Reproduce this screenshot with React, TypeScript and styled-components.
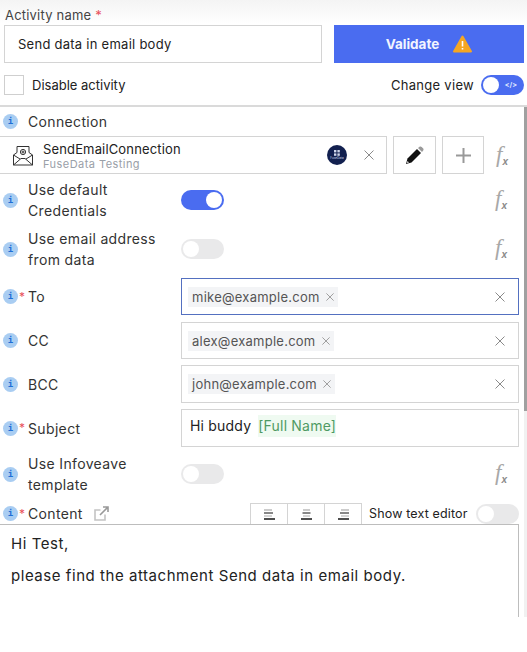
import styled, { createGlobalStyle } from 'styled-components'

const GlobalStyle = createGlobalStyle`
  html, body {
    margin: 0;
    padding: 0;
    background: #fff;
  }
  * {
    box-sizing: border-box;
  }
`

const Page = styled.div`
  width: 527px;
  height: 652px;
  overflow: hidden;
  background: #fff;
  color: #222;
  font-family: Inter, "Open Sans", sans-serif;
  font-size: 13px;
`

const Header = styled.div`
  height: 105px;
  padding: 7px 3px 0 4px;
  background: linear-gradient(#f4f4f4 0, #fff 24px);
`

const TopLabel = styled.div`
  height: 18px;
  line-height: 16px;
  padding-left: 1px;
  color: #444;
  letter-spacing: 0.2px;
`

const Star = styled.span`
  color: #e8505b;
`

const NameRow = styled.div`
  display: flex;
  gap: 12px;
`

const NameInput = styled.div`
  width: 318px;
  height: 38px;
  padding-left: 13px;
  display: flex;
  align-items: center;
  border: 1px solid #d4d4d4;
  color: #222;
  letter-spacing: 0.26px;
`

const ValidateButton = styled.div`
  flex: 1;
  height: 38px;
  display: flex;
  align-items: center;
  justify-content: center;
  gap: 14px;
  background: #4a6cf0;
  color: #f2f4ff;
  font-size: 13.5px;
  font-weight: 700;
`

const OptionsRow = styled.div`
  display: flex;
  align-items: center;
  height: 20px;
  margin-top: 12px;
`

const Checkbox = styled.div`
  width: 20px;
  height: 20px;
  border: 1px solid #cfcfcf;
  margin-right: 8px;
`

const Spacer = styled.div`
  flex: 1;
`

const ViewLabel = styled.span`
  margin-right: 7px;
  letter-spacing: 0.3px;
`

const Switch = styled.div<{ $on?: boolean; $primary?: boolean }>`
  position: relative;
  flex: none;
  width: 43px;
  height: 20px;
  border-radius: 10px;
  background: ${p => (p.$primary ? '#4a6cf0' : '#e9e9ea')};
  &::after {
    content: '';
    position: absolute;
    top: 2px;
    left: ${p => (p.$on ? '25px' : '2px')};
    width: 16px;
    height: 16px;
    border-radius: 50%;
    background: #fff;
  }
`

const CodeMark = styled.span`
  position: absolute;
  right: 7px;
  top: 3px;
  color: #dfe5ff;
  font-size: 7px;
  line-height: 14px;
  font-weight: 700;
`

const Body = styled.div`
  position: relative;
  height: 512px;
  overflow: hidden;
  border-top: 2px solid #dadada;
`

const Form = styled.div`
  display: flex;
  flex-direction: column;
  gap: 7px;
  padding-top: 5px;
  margin-right: 8px;
`

const Row = styled.div<{ $height?: number; $top?: number }>`
  display: flex;
  align-items: center;
  height: ${p => p.$height ?? 37}px;
  margin-top: ${p => p.$top ?? 0}px;
`

const LabelCell = styled.div`
  flex: none;
  width: 181px;
  padding-left: 3px;
  display: flex;
  align-items: center;
`

const InfoIcon = styled.span`
  flex: none;
  width: 15px;
  height: 15px;
  border-radius: 50%;
  background: #a9cdf2;
  color: #1f6fd6;
  font-family: "DejaVu Sans Mono", monospace;
  font-size: 9px;
  font-weight: 700;
  line-height: 15px;
  text-align: center;
`

const RequiredMark = styled.span<{ $show?: boolean }>`
  flex: none;
  width: 10px;
  padding-left: 1px;
  color: #e8505b;
  font-size: 12px;
  line-height: 12px;
  visibility: ${p => (p.$show ? 'visible' : 'hidden')};
`

const LabelText = styled.span`
  color: #333;
  font-size: 14px;
  line-height: 21px;
  letter-spacing: 0.35px;
`

const Fx = styled.span`
  flex: none;
  margin-top: -3px;
  font-family: "Liberation Serif", serif;
  font-style: italic;
  font-size: 23px;
  line-height: 24px;
  color: #a8a8a8;
  white-space: nowrap;
  sub {
    font-family: "Liberation Sans", sans-serif;
    font-size: 10px;
    font-weight: 700;
    color: #8a8a8a;
    line-height: 0;
    vertical-align: -3px;
  }
`

const FieldBox = styled.div<{ $active?: boolean }>`
  flex: 1;
  height: 100%;
  display: flex;
  align-items: center;
  padding: 0 13px 0 6px;
  border: 1px solid ${p => (p.$active ? '#5470c0' : '#d4d4d4')};
`

const Tag = styled.span`
  display: inline-flex;
  align-items: center;
  gap: 6px;
  height: 20px;
  padding: 0 4px;
  background: #f3f4f6;
  color: #555;
  letter-spacing: 0.25px;
`

const ClearIcon = styled.svg`
  flex: none;
  stroke: #8a8a8a;
  fill: none;
  stroke-width: 1;
`

const ClearSlot = styled.div`
  flex: 1;
  display: flex;
  justify-content: flex-end;
`

const ToggleSlot = styled.div`
  flex: 1;
  display: flex;
  align-items: center;
  justify-content: space-between;
  padding-right: 12px;
`

const ConnectionBox = styled.div`
  flex: none;
  width: 388px;
  height: 100%;
  margin-left: -1px;
  display: flex;
  align-items: center;
  padding: 0 12px 0 13px;
  border: 1px solid #d4d4d4;
`

const ConnectionText = styled.div`
  margin-left: 10px;
  flex: 1;
  padding-top: 2px;
`

const ConnectionName = styled.div`
  line-height: 16px;
  color: #222;
  letter-spacing: 0.15px;
`

const ConnectionSub = styled.div`
  font-size: 11px;
  line-height: 15px;
  color: #9aa0a8;
  letter-spacing: 0.45px;
`

const Logo = styled.div`
  width: 20px;
  height: 20px;
  margin-right: 17px;
  border-radius: 50%;
  background: #12204f;
  color: #cfd6ea;
  display: flex;
  flex-direction: column;
  align-items: center;
  justify-content: center;
`

const LogoText = styled.span`
  font-size: 3px;
  line-height: 4px;
`

const SquareButton = styled.div<{ $width: number }>`
  flex: none;
  width: ${p => p.$width}px;
  height: 100%;
  margin-left: 6px;
  display: flex;
  align-items: center;
  justify-content: center;
  border: 1px solid #d4d4d4;
`

const FxEnd = styled.div`
  flex: none;
  margin-left: 12px;
`

const SubjectBox = styled.div`
  flex: 1;
  height: 100%;
  padding: 5px 0 0 8px;
  display: flex;
  align-items: flex-start;
  gap: 7px;
  border: 1px solid #d4d4d4;
  color: #222;
  font-size: 14px;
  line-height: 22px;
  letter-spacing: 0.2px;
`

const Token = styled.span`
  background: #effaf1;
  color: #4f9a63;
`

const ContentHead = styled.div`
  display: flex;
  align-items: center;
  height: 21px;
  margin-top: 1px;
`

const ContentLabel = styled(LabelCell)`
  width: 250px;
`

const OpenIcon = styled.svg`
  margin-left: 11px;
  stroke: #c4c4c4;
  fill: none;
  stroke-width: 1.6;
`

const AlignGroup = styled.div`
  flex: none;
  display: flex;
  height: 21px;
  width: 112px;
  border: 1px solid #d4d4d4;
  border-bottom: none;
`

const AlignButton = styled.div`
  flex: 1;
  display: flex;
  align-items: center;
  justify-content: center;
  & + & {
    border-left: 1px solid #d4d4d4;
  }
`

const EditorLabel = styled.span`
  margin: 0 8px 0 7px;
  font-size: 12.5px;
  white-space: nowrap;
  letter-spacing: 0.15px;
`

const Editor = styled.div`
  height: 140px;
  margin-top: -7px;
  padding: 9px 10px 0 11px;
  border: 1px solid #bdbdbd;
  border-left: none;
  font-size: 15px;
  line-height: 20px;
  color: #222;
  letter-spacing: 0.55px;
`

const EditorLine = styled.p`
  margin: 0 0 12px;
`

const Scrollbar = styled.div`
  position: absolute;
  top: 0;
  right: 0;
  bottom: 0;
  width: 3px;
  background: #f1f1f1;
  &::after {
    content: '';
    display: block;
    height: 304px;
    background: #a0a0a0;
  }
`

function Info({ required, children }: { required?: boolean; children: React.ReactNode }) {
  return (
    <LabelCell>
      <InfoIcon>i</InfoIcon>
      <RequiredMark $show={required}>*</RequiredMark>
      <LabelText>{children}</LabelText>
    </LabelCell>
  )
}

function FxMark() {
  return (
    <Fx>
      f<sub>x</sub>
    </Fx>
  )
}

function Clear({ size = 10 }: { size?: number }) {
  return (
    <ClearIcon width={size} height={size} viewBox="0 0 10 10">
      <path d="M0.5 0.5 9.5 9.5M9.5 0.5 0.5 9.5" />
    </ClearIcon>
  )
}

function EmailField({ value, active }: { value: string; active?: boolean }) {
  return (
    <FieldBox $active={active}>
      <Tag>
        {value}
        <Clear size={8} />
      </Tag>
      <ClearSlot>
        <Clear />
      </ClearSlot>
    </FieldBox>
  )
}

// each icon is four lines: pale, black, pale, heavy
function AlignLines({ kind }: { kind: 'left' | 'center' | 'right' }) {
  const short = { left: [0, 8], center: [2, 9], right: [3, 11] }[kind]
  const mid = { left: [0, 9], center: [1.5, 9.5], right: [2, 11] }[kind]
  return (
    <svg width="11" height="11" viewBox="0 0 11 11" fill="none">
      <path d={`M${short[0]} 1H${short[1]}`} stroke="#999" />
      <path d={`M${mid[0]} 4H${mid[1]}`} stroke="#111" />
      <path d={`M${short[0]} 7H${short[1]}`} stroke="#aaa" />
      <path d="M0 10H11" stroke="#222" strokeWidth="1.6" />
    </svg>
  )
}

export default function App() {
  return (
    <Page>
      <GlobalStyle />
      <Header>
        <TopLabel>
          Activity name <Star>*</Star>
        </TopLabel>
        <NameRow>
          <NameInput>Send data in email body</NameInput>
          <ValidateButton>
            Validate
            <svg width="19" height="18" viewBox="0 0 19 18">
              <path d="M9.5 1.5 18 16.5H1Z" fill="#f5a623" stroke="#f5a623" strokeWidth="2" strokeLinejoin="round" />
              <path d="M9.5 6v5.5M9.5 13v1.6" stroke="#fff" strokeWidth="1.6" />
            </svg>
          </ValidateButton>
        </NameRow>
        <OptionsRow>
          <Checkbox />
          <span>Disable activity</span>
          <Spacer />
          <ViewLabel>Change view</ViewLabel>
          <Switch $primary>
            <CodeMark>&lt;/&gt;</CodeMark>
          </Switch>
        </OptionsRow>
      </Header>
      <Body>
        <Form>
          <Row $height={18}>
            <Info>Connection</Info>
          </Row>
          <Row $height={38} $top={-1}>
            <ConnectionBox>
              <svg width="20" height="21" viewBox="0 0 20 21" fill="none" stroke="#333" strokeWidth="1">
                <path d="M0.5 10 4 7.5V1.5H16V7.5L19.5 10V20H0.5Z" />
                <path d="M0.5 20 8 13.5H12L19.5 20M0.5 10 7 14M19.5 10 13 14" />
                <circle cx="10" cy="7" r="2.6" />
                <circle cx="10" cy="7" r="1" />
              </svg>
              <ConnectionText>
                <ConnectionName>SendEmailConnection</ConnectionName>
                <ConnectionSub>FuseData Testing</ConnectionSub>
              </ConnectionText>
              <Logo>
                <svg width="6" height="6" viewBox="0 0 6 6" fill="#cfd6ea">
                  <rect width="2.4" height="2.4" />
                  <rect x="3.4" width="2.4" height="2.4" />
                  <rect y="3.4" width="2.4" height="2.4" />
                  <rect x="3.4" y="3.4" width="2.4" height="2.4" />
                </svg>
                <LogoText>FuseData</LogoText>
              </Logo>
              <Clear />
            </ConnectionBox>
            <SquareButton $width={43}>
              <svg width="19" height="19" viewBox="0 0 19 19">
                <path d="M1 18 2.5 12.5 12 3 16 7 6.5 16.5Z" fill="#111" />
                <path d="M2.6 15 4 16.4 2 17Z" fill="#fff" />
                <path d="M13 2 14.5 0.8C15.2 0.3 16 0.3 16.7 1L18 2.3C18.7 3 18.7 3.8 18.2 4.5L17 6Z" fill="#9a9a9a" />
              </svg>
            </SquareButton>
            <SquareButton $width={42}>
              <svg width="15" height="15" viewBox="0 0 15 15" stroke="#999" strokeWidth="2">
                <path d="M7.5 0V15M0 7.5H15" />
              </svg>
            </SquareButton>
            <FxEnd>
              <FxMark />
            </FxEnd>
          </Row>
          <Row $height={42} $top={-2}>
            <Info>
              Use default
              <br />
              Credentials
            </Info>
            <ToggleSlot>
              <Switch $on $primary />
              <FxMark />
            </ToggleSlot>
          </Row>
          <Row $height={42}>
            <Info>
              Use email address
              <br />
              from data
            </Info>
            <ToggleSlot>
              <Switch />
              <FxMark />
            </ToggleSlot>
          </Row>
          <Row $top={1}>
            <Info required>To</Info>
            <EmailField value="mike@example.com" active />
          </Row>
          <Row>
            <Info>CC</Info>
            <EmailField value="alex@example.com" />
          </Row>
          <Row $height={38} $top={-1}>
            <Info>BCC</Info>
            <EmailField value="john@example.com" />
          </Row>
          <Row $height={38} $top={-1}>
            <Info required>Subject</Info>
            <SubjectBox>
              Hi buddy
              <Token>[Full Name]</Token>
            </SubjectBox>
          </Row>
          <Row $height={42} $top={-1}>
            <Info>
              Use Infoveave
              <br />
              template
            </Info>
            <ToggleSlot>
              <Switch />
              <FxMark />
            </ToggleSlot>
          </Row>
          <ContentHead>
            <ContentLabel>
              <InfoIcon>i</InfoIcon>
              <RequiredMark $show>*</RequiredMark>
              <LabelText>Content</LabelText>
              <OpenIcon width="15" height="15" viewBox="0 0 15 15">
                <path d="M11 8.5V14H1V4H6.5" />
                <path d="M6 9 14 1M9 1H14V6" stroke="#999" />
              </OpenIcon>
            </ContentLabel>
            <AlignGroup>
              <AlignButton>
                <AlignLines kind="left" />
              </AlignButton>
              <AlignButton>
                <AlignLines kind="center" />
              </AlignButton>
              <AlignButton>
                <AlignLines kind="right" />
              </AlignButton>
            </AlignGroup>
            <EditorLabel>Show text editor</EditorLabel>
            <Switch />
          </ContentHead>
          <Editor>
            <EditorLine>Hi Test,</EditorLine>
            <EditorLine>please find the attachment Send data in email body.</EditorLine>
          </Editor>
        </Form>
        <Scrollbar />
      </Body>
    </Page>
  )
}
